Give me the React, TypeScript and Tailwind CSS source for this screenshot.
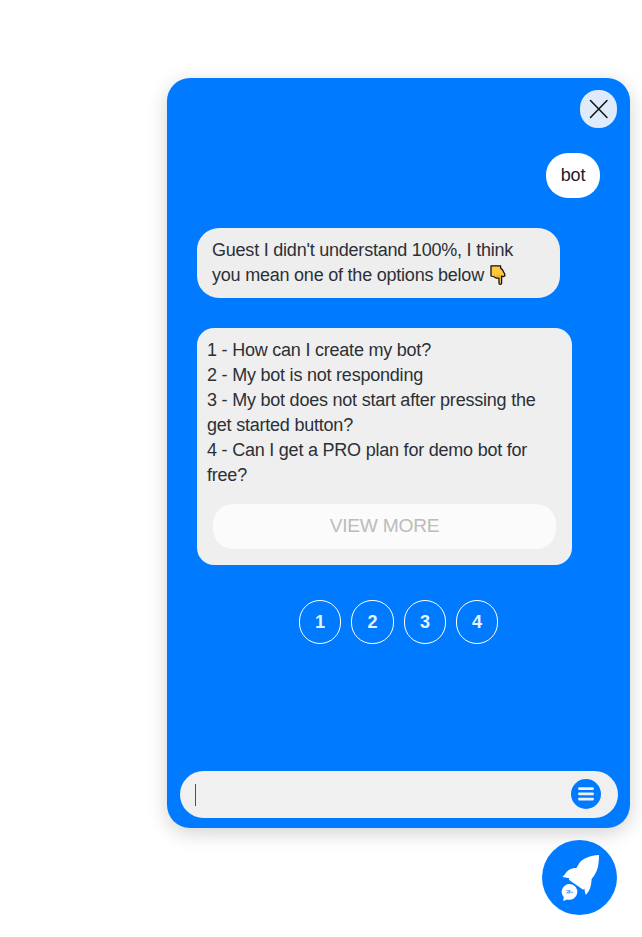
const circles: { label: string; width: string }[] = [
  { label: '1', width: 'w-[42px]' },
  { label: '2', width: 'w-[43px]' },
  { label: '3', width: 'w-[42px]' },
  { label: '4', width: 'w-[42px]' },
];

function PointingHand() {
  return (
    <svg className="ml-[6px] inline-block h-[20px] w-[16px] align-[-4px]" viewBox="0 0 16 20" aria-label="pointing down">
      <path
        d="M1 .8H10.6V3L12.6 5L14.8 9.3V11L13.2 11.6L11.6 11V18.2Q11.6 19.3 10.3 19.3Q9 19.3 9 18.2V13.2H6.4L4.5 12L1 11Z"
        fill="#ffc83d"
        stroke="#111"
        strokeWidth="1.3"
        strokeLinejoin="round"
      />
      <path d="M4.5 9.6V11.2M7 9.8V12M9.2 9.5V12" stroke="#d67d00" strokeWidth=".6" />
    </svg>
  );
}

function Rocket() {
  return (
    <svg className="h-[75px] w-[75px]" viewBox="0 0 75 75" fill="#fff">
      <path d="M57 15C48 15.6 41 18.3 37.7 22.5C36.3 24.5 35.5 26.5 34.4 28C30 28 26.8 29.4 24.6 32C23.2 33.9 21.8 35.6 20.4 37L27.5 38.2L26.8 39.8L41.2 49.8L42.4 48.6C42.6 51 43 53 43.8 55C46.4 52.3 48.2 49 49 44.8L49.7 38.8C52.6 35.6 54.9 31.3 55.9 27C56.8 22.8 57 18.8 57 15Z" />
      <path d="M27.6 43.9A7.9 7.9 0 1 1 25.3 59.4L21.2 61L21.7 57A7.9 7.9 0 0 1 27.6 43.9Z" />
      <path d="M24.5 50.6H28.4L24.7 53M24.7 53H28.2L27 51.8L31 52.5" fill="none" stroke="#3a96ff" strokeWidth=".8" />
    </svg>
  );
}

export default function App() {
  return (
    <div className="flex h-[937px] w-[642px] flex-col items-end overflow-hidden bg-white pt-[78px] font-['Liberation_Sans',Arial,sans-serif] text-[18px] leading-[25px] tracking-[-0.22px] text-[#2b3036]">
      <main className="mr-3 flex h-[750px] w-[463px] shrink-0 flex-col rounded-[23px] bg-[#007bff] shadow-[0_5px_20px_rgba(0,0,0,0.18)]">
        <button aria-label="Close" className="mt-3 mr-[13px] flex h-[38px] w-[37px] items-center justify-center self-end rounded-[18px] bg-[#dfebfb]">
          <svg className="h-[20px] w-[20px]" viewBox="0 0 20 20" fill="none" stroke="#111" strokeWidth="1.5" strokeLinecap="round">
            <path d="M1.5 1.5L18 18.5M18 1.5L1.5 18.5" />
          </svg>
        </button>

        <div className="mt-[25px] mr-[30px] flex h-[45px] w-[54px] items-center justify-center self-end rounded-[22px] bg-white text-[#212121]">bot</div>

        <div className="mt-[30px] ml-[30px] h-[70px] w-[363px] rounded-[22px] bg-[#eee] px-[15px] py-[10px] whitespace-nowrap">
          Guest I didn't understand 100%, I think
          <br />
          you mean one of the options below
          <PointingHand />
        </div>

        <div className="mt-[30px] ml-[30px] h-[237px] w-[375px] rounded-[17px] bg-[#efefef] px-[10px] pt-[10px] whitespace-nowrap">
          <p>1 - How can I create my bot?</p>
          <p>2 - My bot is not responding</p>
          <p>3 - My bot does not start after pressing the<br />get started button?</p>
          <p>4 - Can I get a PRO plan for demo bot for<br />free?</p>
          <button className="mt-4 ml-[6px] block h-[45px] w-[343px] rounded-[20px] bg-[#fbfbfb] pb-[2px] text-[19.2px] tracking-[-0.25px] text-[#bcbcbc]">VIEW MORE</button>
        </div>

        <div className="mt-[35px] ml-[132px] flex gap-[10px]">
          {circles.map((c) => (
            <button key={c.label} className={`${c.width} flex h-[44px] items-center justify-center rounded-[21px] border border-white font-bold text-[#e6f2ff]`}>
              {c.label}
            </button>
          ))}
        </div>

        <div className="mt-auto mb-[10px] ml-[13px] flex h-[47px] w-[438px] items-center justify-between rounded-[24px] bg-[#f0f0f0] pr-[17px] pl-[15px]">
          <span className="h-[22px] w-px bg-[#495057]" />
          <button aria-label="Menu" className="mb-px h-[30px] w-[30px] rounded-full bg-[#007bff]">
            <svg className="h-[30px] w-[30px]" viewBox="0 0 30 30" fill="#f0f0f0">
              <rect x="7.2" y="8.3" width="15.6" height="2.7" rx=".8" />
              <rect x="7.2" y="13.5" width="15.6" height="2.7" rx=".8" />
              <rect x="7.2" y="18.7" width="15.6" height="2.7" rx=".8" />
            </svg>
          </button>
        </div>
      </main>

      <button aria-label="Open chat" className="mt-3 mr-[25px] h-[75px] w-[75px] shrink-0 rounded-full bg-[#007bff]">
        <Rocket />
      </button>
    </div>
  );
}
